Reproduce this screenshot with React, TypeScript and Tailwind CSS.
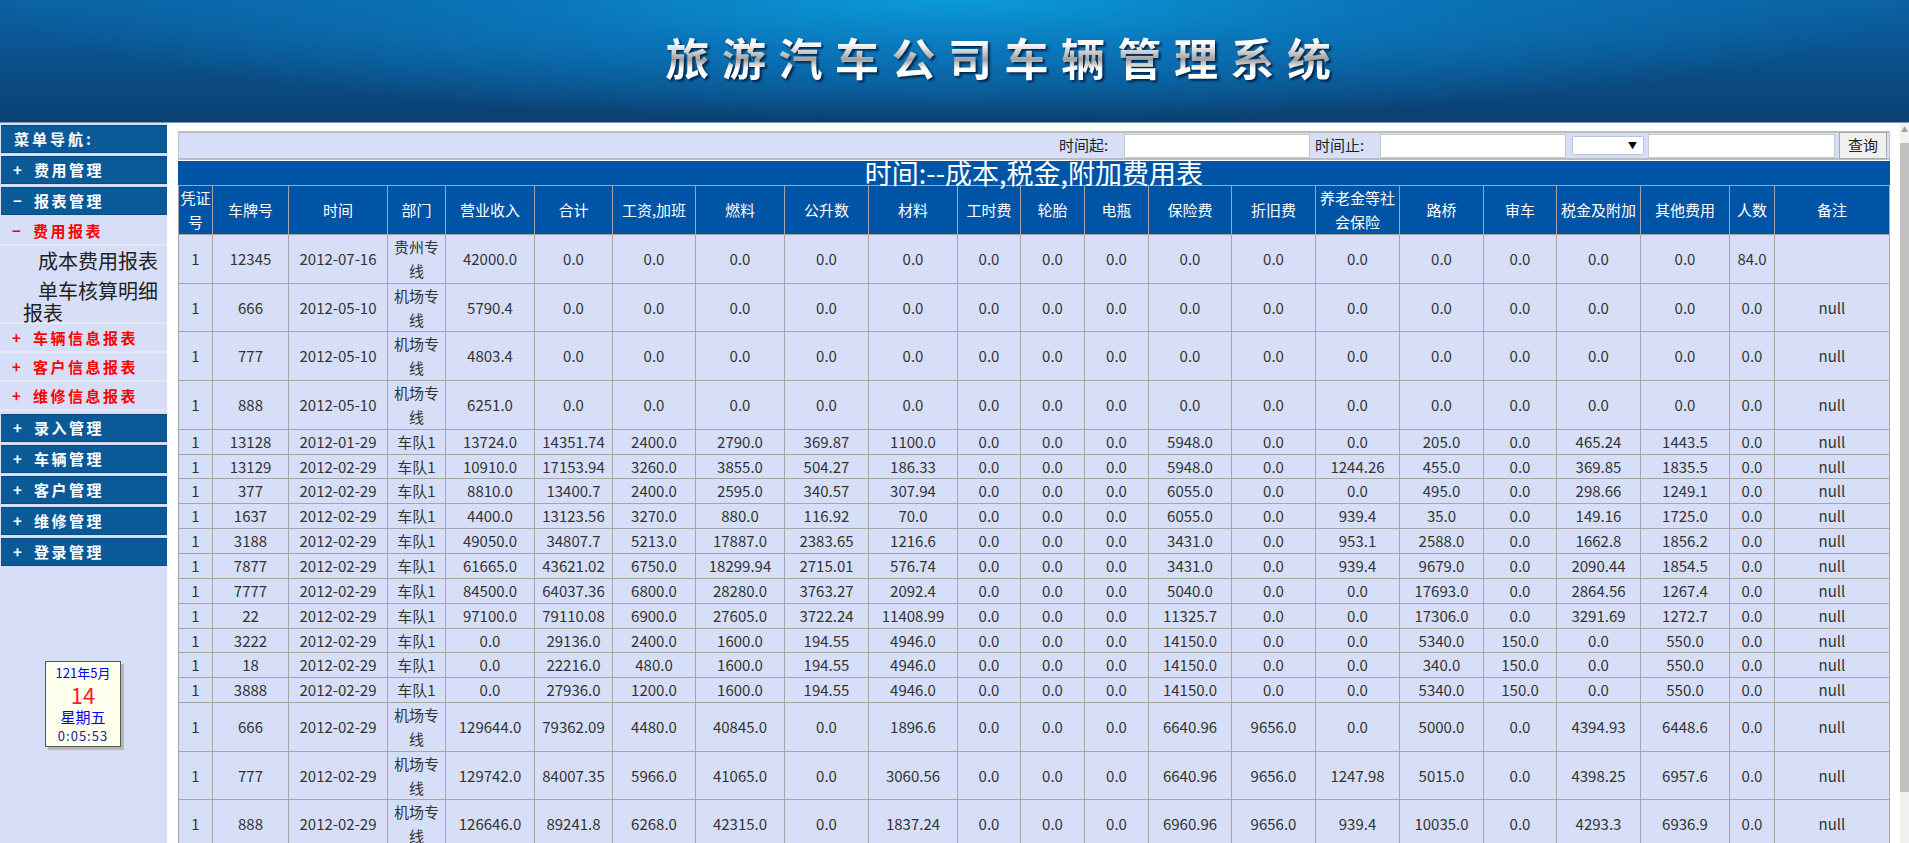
import React from 'react'

const columns = [
  { title: '凭证号', width: 'w-[34px]' },
  { title: '车牌号', width: 'w-[76px]' },
  { title: '时间', width: 'w-[99px]' },
  { title: '部门', width: 'w-[58px]' },
  { title: '营业收入', width: 'w-[89px]' },
  { title: '合计', width: 'w-[78px]' },
  { title: '工资,加班', width: 'w-[83px]' },
  { title: '燃料', width: 'w-[89px]' },
  { title: '公升数', width: 'w-[84px]' },
  { title: '材料', width: 'w-[89px]' },
  { title: '工时费', width: 'w-[63px]' },
  { title: '轮胎', width: 'w-[64px]' },
  { title: '电瓶', width: 'w-[64px]' },
  { title: '保险费', width: 'w-[83px]' },
  { title: '折旧费', width: 'w-[84px]' },
  { title: '养老金等社会保险', width: 'w-[84px]' },
  { title: '路桥', width: 'w-[84px]' },
  { title: '审车', width: 'w-[73px]' },
  { title: '税金及附加', width: 'w-[84px]' },
  { title: '其他费用', width: 'w-[89px]' },
  { title: '人数', width: 'w-[45px]' },
  { title: '备注', width: 'w-[115px]' },
]

const z = '0.0'

// plate, date, dept, income, total, wage, fuel, litres, material, insurance, depreciation, pension, toll, inspection, tax, other
const rawRows = [
  ['12345', '2012-07-16', '贵州专线', '42000.0', z, z, z, z, z, z, z, z, z, z, z, z],
  ['666', '2012-05-10', '机场专线', '5790.4', z, z, z, z, z, z, z, z, z, z, z, z],
  ['777', '2012-05-10', '机场专线', '4803.4', z, z, z, z, z, z, z, z, z, z, z, z],
  ['888', '2012-05-10', '机场专线', '6251.0', z, z, z, z, z, z, z, z, z, z, z, z],
  ['13128', '2012-01-29', '车队1', '13724.0', '14351.74', '2400.0', '2790.0', '369.87', '1100.0', '5948.0', z, z, '205.0', z, '465.24', '1443.5'],
  ['13129', '2012-02-29', '车队1', '10910.0', '17153.94', '3260.0', '3855.0', '504.27', '186.33', '5948.0', z, '1244.26', '455.0', z, '369.85', '1835.5'],
  ['377', '2012-02-29', '车队1', '8810.0', '13400.7', '2400.0', '2595.0', '340.57', '307.94', '6055.0', z, z, '495.0', z, '298.66', '1249.1'],
  ['1637', '2012-02-29', '车队1', '4400.0', '13123.56', '3270.0', '880.0', '116.92', '70.0', '6055.0', z, '939.4', '35.0', z, '149.16', '1725.0'],
  ['3188', '2012-02-29', '车队1', '49050.0', '34807.7', '5213.0', '17887.0', '2383.65', '1216.6', '3431.0', z, '953.1', '2588.0', z, '1662.8', '1856.2'],
  ['7877', '2012-02-29', '车队1', '61665.0', '43621.02', '6750.0', '18299.94', '2715.01', '576.74', '3431.0', z, '939.4', '9679.0', z, '2090.44', '1854.5'],
  ['7777', '2012-02-29', '车队1', '84500.0', '64037.36', '6800.0', '28280.0', '3763.27', '2092.4', '5040.0', z, z, '17693.0', z, '2864.56', '1267.4'],
  ['22', '2012-02-29', '车队1', '97100.0', '79110.08', '6900.0', '27605.0', '3722.24', '11408.99', '11325.7', z, z, '17306.0', z, '3291.69', '1272.7'],
  ['3222', '2012-02-29', '车队1', z, '29136.0', '2400.0', '1600.0', '194.55', '4946.0', '14150.0', z, z, '5340.0', '150.0', z, '550.0'],
  ['18', '2012-02-29', '车队1', z, '22216.0', '480.0', '1600.0', '194.55', '4946.0', '14150.0', z, z, '340.0', '150.0', z, '550.0'],
  ['3888', '2012-02-29', '车队1', z, '27936.0', '1200.0', '1600.0', '194.55', '4946.0', '14150.0', z, z, '5340.0', '150.0', z, '550.0'],
  ['666', '2012-02-29', '机场专线', '129644.0', '79362.09', '4480.0', '40845.0', z, '1896.6', '6640.96', '9656.0', z, '5000.0', z, '4394.93', '6448.6'],
  ['777', '2012-02-29', '机场专线', '129742.0', '84007.35', '5966.0', '41065.0', z, '3060.56', '6640.96', '9656.0', '1247.98', '5015.0', z, '4398.25', '6957.6'],
  ['888', '2012-02-29', '机场专线', '126646.0', '89241.8', '6268.0', '42315.0', z, '1837.24', '6960.96', '9656.0', '939.4', '10035.0', z, '4293.3', '6936.9'],
]

const rows = rawRows.map((r, i) => [
  '1', r[0], r[1], r[2], r[3], r[4], r[5], r[6], r[7], r[8],
  z, z, z,
  r[9], r[10], r[11], r[12], r[13], r[14], r[15],
  i === 0 ? '84.0' : z,
  i === 0 ? '' : 'null',
])

const BlueItem = ({ sign, label }: { sign: string; label: string }) => (
  <div className="mt-[3px] ml-px flex h-[28px] w-[166px] items-center border-y border-[#0a4a80] bg-[#0b5a98] pl-[12px] text-[15px] font-bold tracking-[2.5px] text-white">
    <span className="w-[21px] tracking-normal">{sign}</span>
    <span>{label}</span>
  </div>
)

const RedItem = ({ sign, label }: { sign: string; label: string }) => (
  <div className="flex h-[29px] items-center border-b-2 border-[#e6e9f2] pt-[2px] pl-[12px] text-[15px] font-bold tracking-[2.5px] text-[#ff0000]">
    <span className="w-[21px] tracking-normal">{sign}</span>
    <span>{label}</span>
  </div>
)

const Sidebar = () => (
  <div className="flex h-full w-[167px] shrink-0 flex-col bg-[#d6dff7] pt-[2px]">
    <div className="ml-px flex h-[28px] w-[166px] items-center border-y border-[#0a4a80] bg-[#0b5a98] pl-[13px] text-[15px] font-bold tracking-[3px] text-white">
      菜单导航:
    </div>
    <BlueItem sign="+" label="费用管理" />
    <BlueItem sign="−" label="报表管理" />
    <div className="mt-[2px]">
      <RedItem sign="−" label="费用报表" />
    </div>
    <div className="h-[78px] border-b-2 border-[#e6e9f2] pl-[23px] text-[20px] leading-[30px] text-[#222222]">
      <div className="pl-[15px]">成本费用报表</div>
      <div className="pl-[15px]">单车核算明细</div>
      <div className="-mt-[8px]">报表</div>
    </div>
    <RedItem sign="+" label="车辆信息报表" />
    <RedItem sign="+" label="客户信息报表" />
    <RedItem sign="+" label="维修信息报表" />
    <BlueItem sign="+" label="录入管理" />
    <BlueItem sign="+" label="车辆管理" />
    <BlueItem sign="+" label="客户管理" />
    <BlueItem sign="+" label="维修管理" />
    <BlueItem sign="+" label="登录管理" />
    <div className="mt-[95px] ml-[45px] w-[76px] border border-[#555555] bg-[#ffffee] py-[2px] text-center shadow-[3px_3px_0_#b8b8b8]">
      <div className="text-[13px] leading-[18px] text-[#0000ee]">121年5月</div>
      <div className="text-[22px] leading-[24px] text-[#ff2020]">14</div>
      <div className="text-[15px] leading-[22px] text-[#0000ee]">星期五</div>
      <div className="text-[13px] leading-[16px] tracking-[1px] text-[#222288]">0:05:53</div>
    </div>
  </div>
)

const Toolbar = () => (
  <div className="flex h-[29px] w-[1712px] items-center border-y-2 border-x border-[#bdbdbd] border-x-[#c4c4c4] bg-[#d6dff7] text-[15px] text-[#222222]">
    <span className="ml-[880px] w-[65px]">时间起:</span>
    <input className="h-[24px] w-[186px] border border-[#c8c8c8] bg-white" />
    <span className="ml-[5px] w-[65px]">时间止:</span>
    <input className="h-[24px] w-[186px] border border-[#c8c8c8] bg-white" />
    <div className="ml-[6px] flex h-[19px] w-[72px] items-center justify-end rounded-[2px] border border-[#c0c4d0] bg-white pr-[6px] text-[9px] text-black">
      ▼
    </div>
    <input className="ml-[4px] h-[24px] w-[187px] border border-[#c8c8c8] bg-white" />
    <button className="ml-[4px] h-[27px] w-[48px] border border-[#a8a8a8] bg-[#f0f0f0] text-[15px] text-[#222222]">
      查询
    </button>
  </div>
)

const ReportTable = () => (
  <table className="w-[1712px] table-fixed border-collapse">
    <colgroup>
      {columns.map((c) => (
        <col key={c.title} className={c.width} />
      ))}
    </colgroup>
    <thead>
      <tr>
        {columns.map((c) => (
          <th
            key={c.title}
            className="border border-[#a6a6a6] bg-[#0054a6] p-0 text-center text-[15px] leading-[24px] font-normal text-white"
          >
            {c.title}
          </th>
        ))}
      </tr>
    </thead>
    <tbody>
      {rows.map((row, i) => (
        <tr key={i}>
          {row.map((cell, j) => (
            <td
              key={j}
              className="border border-[#a6a6a6] bg-[#d6dff7] p-0 text-center text-[15px] leading-[23.85px] text-[#333333]"
            >
              {cell}
            </td>
          ))}
        </tr>
      ))}
    </tbody>
  </table>
)

const App = () => {
  return (
    <div className="flex h-[843px] w-[1909px] flex-col overflow-hidden bg-white font-['Noto_Sans_CJK_SC','Noto_Sans',sans-serif]">
      <div className="flex h-[123px] shrink-0 items-start justify-center border-b border-[#6f9bbd] bg-[radial-gradient(ellipse_50%_100%_at_50%_0%,#0a9bd9_0%,#0a74b8_45%,rgba(10,96,160,0)_100%),linear-gradient(to_bottom,#0a62a5_0%,#0b3f70_100%)] pt-[30px]">
        <h1 className="ml-[100px] bg-[linear-gradient(to_bottom,#ffffff_0%,#ffffff_25%,#a0a0a0_55%,#ffffff_72%,#ffffff_100%)] bg-clip-text text-[44px] leading-[54px] font-bold tracking-[12.5px] text-transparent drop-shadow-[2px_2px_1px_rgba(0,20,50,0.8)]">
          旅游汽车公司车辆管理系统
        </h1>
      </div>
      <div className="flex min-h-0 flex-1">
        <Sidebar />
        <div className="min-w-0 flex-1 overflow-hidden pt-[8px] pl-[11px]">
          <Toolbar />
          <div className="mt-[1px] h-[24px] w-[1712px] bg-[#0054a6] text-center text-[27px] leading-[24px] text-white">
            时间:--成本,税金,附加费用表
          </div>
          <ReportTable />
        </div>
        <div className="flex w-[9px] shrink-0 flex-col bg-[#f1f1f1]">
          <div className="flex h-[20px] items-start justify-center text-[7px] leading-[12px] text-[#a0a0a0]">▲</div>
          <div className="h-[649px] bg-[#c1c1c1]" />
        </div>
      </div>
    </div>
  )
}

export default App
